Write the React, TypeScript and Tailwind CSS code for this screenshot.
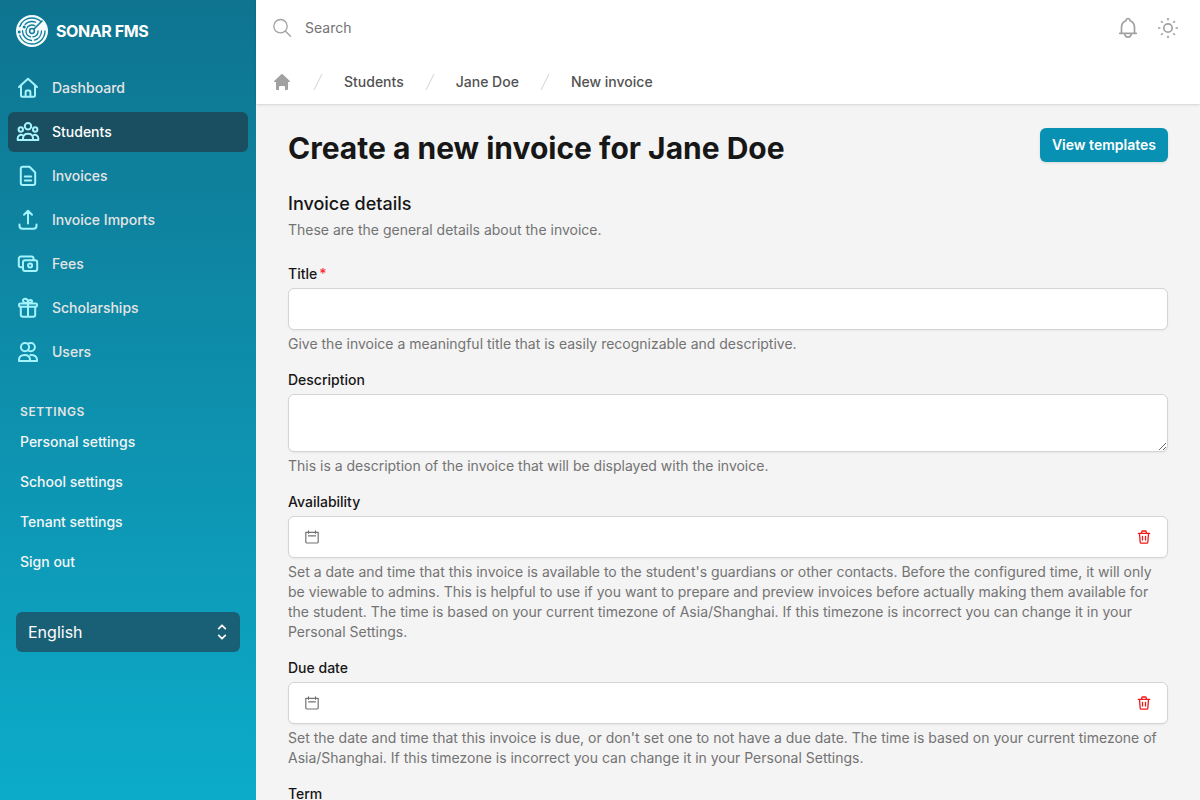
import type { ComponentPropsWithoutRef, ReactNode } from "react";

function Icon({ children, className, ...rest }: ComponentPropsWithoutRef<"svg">) {
  return (
    <svg viewBox="0 0 24 24" fill="none" stroke="currentColor" strokeWidth="2" strokeLinecap="round" strokeLinejoin="round" aria-hidden="true" className={className} {...rest}>
      {children}
    </svg>
  );
}

const icons: Record<string, ReactNode> = {
  home: (
    <>
      <path d="M3 11 12 2.700l9 8.300M5 10v9.500c0 .8.500 1.300 1.300 1.300h11.400c.8 0 1.300-.5 1.300-1.300V10" />
      <path d="M9.600 20.500V16c0-.9.500-1.400 1.400-1.400h2c.9 0 1.400.5 1.400 1.400v4.500" />
    </>
  ),
  group: (
    <>
      <circle cx="12" cy="6.200" r="3.200" />
      <circle cx="4.800" cy="9.500" r="2.200" />
      <circle cx="19.200" cy="9.500" r="2.200" />
      <path d="M7 20v-1.500c0-3 2-4.700 5-4.700s5 1.700 5 4.700V20zM6 14.900c-2.600-.4-4.300 1.200-4.300 3.500V20H7M18 14.900c2.600-.4 4.300 1.200 4.300 3.500V20H17" />
    </>
  ),
  invoice: (
    <>
      <path d="M6.800 2.800h6.700l5.700 5.700v10.500a2 2 0 0 1-2 2H6.800a2 2 0 0 1-2-2V4.800a2 2 0 0 1 2-2z" />
      <path d="M8.800 12.400h6.400M8.800 16.400h6.400" />
    </>
  ),
  upload: <path d="M12 15.500V3.200M8 6.800l4-4 4 4M3.500 16.500v1.200a3 3 0 0 0 3 3h11a3 3 0 0 0 3-3v-1.200" />,
  cash: (
    <>
      <path d="M6.500 15.300H4.800a2 2 0 0 1-2-2V6.500a2 2 0 0 1 2-2h10.700a2 2 0 0 1 2 2V8" />
      <rect x="7" y="8.200" width="14.200" height="10.800" rx="2" />
      <circle cx="14.100" cy="13.600" r="2" />
    </>
  ),
  gift: (
    <>
      <rect x="3" y="7.500" width="18" height="3.300" rx="1.300" />
      <path d="M4.800 11v7.800a2 2 0 0 0 2 2h10.400a2 2 0 0 0 2-2V11M12 7.500v13M12 7.200C8.500 7.200 7 6 7 4.600 7 3.400 7.900 2.800 9 2.800c1.900 0 3 1.700 3 4.400 0-1.900 1-3.200 2.300-3.200 1 0 1.700.6 1.700 1.400 0 1-1.300 1.800-4 1.800z" />
    </>
  ),
  users: (
    <>
      <circle cx="9" cy="7.100" r="4.100" />
      <path d="M12.800 3.300c.7-.2 1.300-.3 2-.3a4.100 4.100 0 0 1 0 8.200c-.7 0-1.300-.1-2-.3M3 21v-1.200c0-2.900 2.200-4.800 5.500-4.800s5.500 1.900 5.500 4.800V21zM14.500 15c4-.2 6.500 1.700 6.500 4.800V21h-7" />
    </>
  ),
};

const navItems = [
  { label: "Dashboard", icon: "home" },
  { label: "Students", icon: "group", current: true },
  { label: "Invoices", icon: "invoice" },
  { label: "Invoice Imports", icon: "upload" },
  { label: "Fees", icon: "cash" },
  { label: "Scholarships", icon: "gift" },
  { label: "Users", icon: "users" },
];

const settings = ["Personal settings", "School settings", "Tenant settings", "Sign out"];
const crumbs = ["Students", "Jane Doe", "New invoice"];

function Logo() {
  return (
    <svg viewBox="0 0 32 32" className="size-8" fill="none" aria-hidden="true">
      <circle cx="16" cy="16" r="16" fill="#f4fcfe" />
      <g stroke="#0e7c9a" strokeWidth="1.300" strokeLinecap="round">
        <circle cx="16" cy="16" r="13" pathLength="360" strokeDasharray="160 40 112 48" />
        <circle cx="16" cy="16" r="9.500" pathLength="360" strokeDasharray="75 18 90 35 75 67" />
        <circle cx="16" cy="16" r="6" pathLength="360" strokeDasharray="80 25 195 60" />
        <path d="M16 16 26 6" strokeWidth="1.600" />
      </g>
      <circle cx="16" cy="16" r="2.400" fill="#f4fcfe" stroke="#0e7c9a" strokeWidth="1.500" />
      <g fill="#0e7c9a" stroke="#f4fcfe" strokeWidth="1">
        <circle cx="8.200" cy="12" r="2" />
        <circle cx="3.200" cy="17" r="2" />
      </g>
    </svg>
  );
}

function Sidebar() {
  return (
    <aside className="flex w-64 shrink-0 flex-col bg-linear-to-b from-[#0e7490] to-[#0bacca] pt-[15px] text-sm font-medium">
      <a href="#" className="flex items-center gap-2 px-4 text-base font-bold tracking-tight text-white">
        <Logo />
        SONAR FMS
      </a>
      <nav aria-label="Main" className="mt-[21px] flex flex-col gap-1 px-2">
        {navItems.map((item) => (
          <a
            key={item.label}
            href="#"
            aria-current={item.current ? "page" : undefined}
            className={item.current ? "flex h-10 items-center gap-3 rounded-md bg-[#194f61] px-2 text-white" : "flex h-10 items-center gap-3 rounded-md px-2 text-neutral-200"}
          >
            <Icon className="size-6 text-[#a5f3fc]">{icons[item.icon]}</Icon>
            {item.label}
          </a>
        ))}
      </nav>
      <h2 className="mt-8 px-5 text-xs leading-4 font-semibold tracking-wider text-neutral-200 uppercase">Settings</h2>
      <nav aria-label="Settings" className="mt-0.5 flex flex-col px-5 text-neutral-100">
        {settings.map((label) => (
          <a key={label} href="#" className="flex h-10 items-center">{label}</a>
        ))}
      </nav>
      <div className="relative mx-4 mt-[30px]">
        <select aria-label="Language" className="block h-10 w-full appearance-none rounded-md bg-[#195f75] px-3 text-base font-normal text-white">
          <option>English</option>
        </select>
        <Icon viewBox="0 0 20 20" strokeWidth="1.800" className="pointer-events-none absolute inset-y-0 right-2 my-auto size-5 text-neutral-100">
          <path d="m6.700 6.600 3.300-3.300 3.300 3.300m0 6.800L10 16.700l-3.300-3.300" />
        </Icon>
      </div>
    </aside>
  );
}

const control = "block w-full rounded-md border border-neutral-300 bg-white shadow-xs";

function Field({ id, label, required, help, children }: { id: string; label: string; required?: boolean; help?: string; children?: ReactNode }) {
  return (
    <div className="flex flex-col">
      <label htmlFor={id} className="mb-1 font-medium text-neutral-900">
        {label}
        {required && <span className="ml-0.5 text-red-500">*</span>}
      </label>
      {children}
      {help && <p className="mt-1 text-neutral-500">{help}</p>}
    </div>
  );
}

function DateInput({ id }: { id: string }) {
  return (
    <div className={control + " flex h-[42px] items-center gap-2 px-[15px]"}>
      <Icon viewBox="0 0 16 16" strokeWidth="1.200" className="size-4 text-neutral-500">
        <path d="M1.800 3.300h12.400v9.400c0 .8-.5 1.300-1.300 1.300H3.100c-.8 0-1.300-.5-1.300-1.300zM4.500 1.800v2.500M11.500 1.800v2.500M4.500 6.800h7" />
      </Icon>
      <input id={id} type="text" className="min-w-0 flex-1 outline-none" />
      <button type="button" aria-label="Clear date" className="text-[#f01818]">
        <Icon viewBox="0 0 16 16" strokeWidth="1.300" className="size-4">
          <path d="M2.300 4.300h11.400M3.500 4.500l.7 8.800c0 .6.400.9 1 .9h5.600c.6 0 1-.3 1-.9l.7-8.800M5.400 4.100l.7-2.100h3.800l.7 2.100M6.500 7.300v3.700M9.500 7.300v3.700" />
        </Icon>
      </button>
    </div>
  );
}

export default function App() {
  return (
    <div className="flex h-screen overflow-hidden bg-[#f4f4f4] font-['Inter',sans-serif] text-sm text-neutral-900 antialiased">
      <Sidebar />
      <div className="flex min-w-0 flex-1 flex-col">
        <header className="z-10 bg-white shadow-sm">
          <div className="flex h-14 items-center gap-4 pr-5 pl-4">
            <Icon viewBox="0 0 20 20" strokeWidth="1.300" className="size-5 text-neutral-400">
              <circle cx="8.500" cy="8.200" r="6.700" />
              <path d="m13.500 13.200 5 5" />
            </Icon>
            <input type="search" aria-label="Search" placeholder="Search" className="-ml-[3px] min-w-0 flex-1 outline-none placeholder:text-neutral-500" />
            <button type="button" aria-label="Notifications" className="text-neutral-400">
              <Icon strokeWidth="1.700" className="size-6">
                <path d="M3.700 17.300h16.600M5.500 17v-5.500c0-3.300 1.800-5.700 4.300-6.700.3-1.500 1.100-2.300 2.200-2.300s1.900.8 2.200 2.300c2.500 1 4.300 3.400 4.300 6.700V17M8.800 17.600c0 2.200 1.300 3.600 3.200 3.600s3.200-1.400 3.200-3.600" />
              </Icon>
            </button>
            <button type="button" aria-label="Toggle theme" className="text-neutral-400">
              <Icon strokeWidth="1.700" className="size-6">
                <circle cx="12" cy="12" r="4.200" />
                <path d="M12 2.700v1M12 20.300v1M2.700 12h1M20.300 12h1M5.600 5.600l.5.500M17.900 17.900l.5.500M5.600 18.400l.5-.5M17.900 6.100l.5-.5" />
              </Icon>
            </button>
          </div>
          <nav aria-label="Breadcrumb">
            <ol className="flex h-12 items-center px-4 pt-[3px]">
              <li>
                <a href="#" aria-label="Home" className="block text-neutral-400">
                  <svg viewBox="0 0 20 20" className="size-5" fill="currentColor" aria-hidden="true">
                    <path d="M9.300 2.300q.7-.6 1.400 0l7.100 6.700q.8.900-.5 1H16V17q0 1-1 1h-2v-3q0-1-1-1H8q-1 0-1 1v3H5q-1 0-1-1v-7H2.700q-1.300-.1-.5-1z" />
                  </svg>
                </a>
              </li>
              {crumbs.map((c) => (
                <li key={c} className="flex items-center">
                  <svg viewBox="0 0 20 20" className="mx-4 size-5" stroke="#d4d4d4" aria-hidden="true"><path d="M6 18 14 2" /></svg>
                  <a href="#" className="font-medium text-neutral-600">{c}</a>
                </li>
              ))}
            </ol>
          </nav>
        </header>
        <main className="min-h-0 flex-1 overflow-y-auto px-8 pt-6 pb-8 [scrollbar-width:none]">
          <div className="flex items-start justify-between">
            <h1 className="text-3xl leading-10 font-bold">Create a new invoice for Jane Doe</h1>
            <button type="button" className="h-[34px] rounded-md bg-[#0891b2] px-3 font-semibold text-white shadow-sm">View templates</button>
          </div>
          <form className="mt-6 flex flex-col gap-4">
            <div className="mb-2">
              <h2 className="text-lg leading-6 font-medium">Invoice details</h2>
              <p className="mt-1 text-neutral-500">These are the general details about the invoice.</p>
            </div>
            <Field id="title" label="Title" required help="Give the invoice a meaningful title that is easily recognizable and descriptive.">
              <input id="title" type="text" className={control + " h-[42px] px-3"} />
            </Field>
            <Field id="description" label="Description" help="This is a description of the invoice that will be displayed with the invoice.">
              <textarea id="description" className={control + " h-[58px] px-3"} />
            </Field>
            <Field id="availability" label="Availability" help="Set a date and time that this invoice is available to the student's guardians or other contacts. Before the configured time, it will only be viewable to admins. This is helpful to use if you want to prepare and preview invoices before actually making them available for the student. The time is based on your current timezone of Asia/Shanghai. If this timezone is incorrect you can change it in your Personal Settings.">
              <DateInput id="availability" />
            </Field>
            <Field id="due" label="Due date" help="Set the date and time that this invoice is due, or don't set one to not have a due date. The time is based on your current timezone of Asia/Shanghai. If this timezone is incorrect you can change it in your Personal Settings.">
              <DateInput id="due" />
            </Field>
            <Field id="term" label="Term">
              <input id="term" type="text" className={control + " h-[42px] px-3"} />
            </Field>
          </form>
        </main>
      </div>
    </div>
  );
}
